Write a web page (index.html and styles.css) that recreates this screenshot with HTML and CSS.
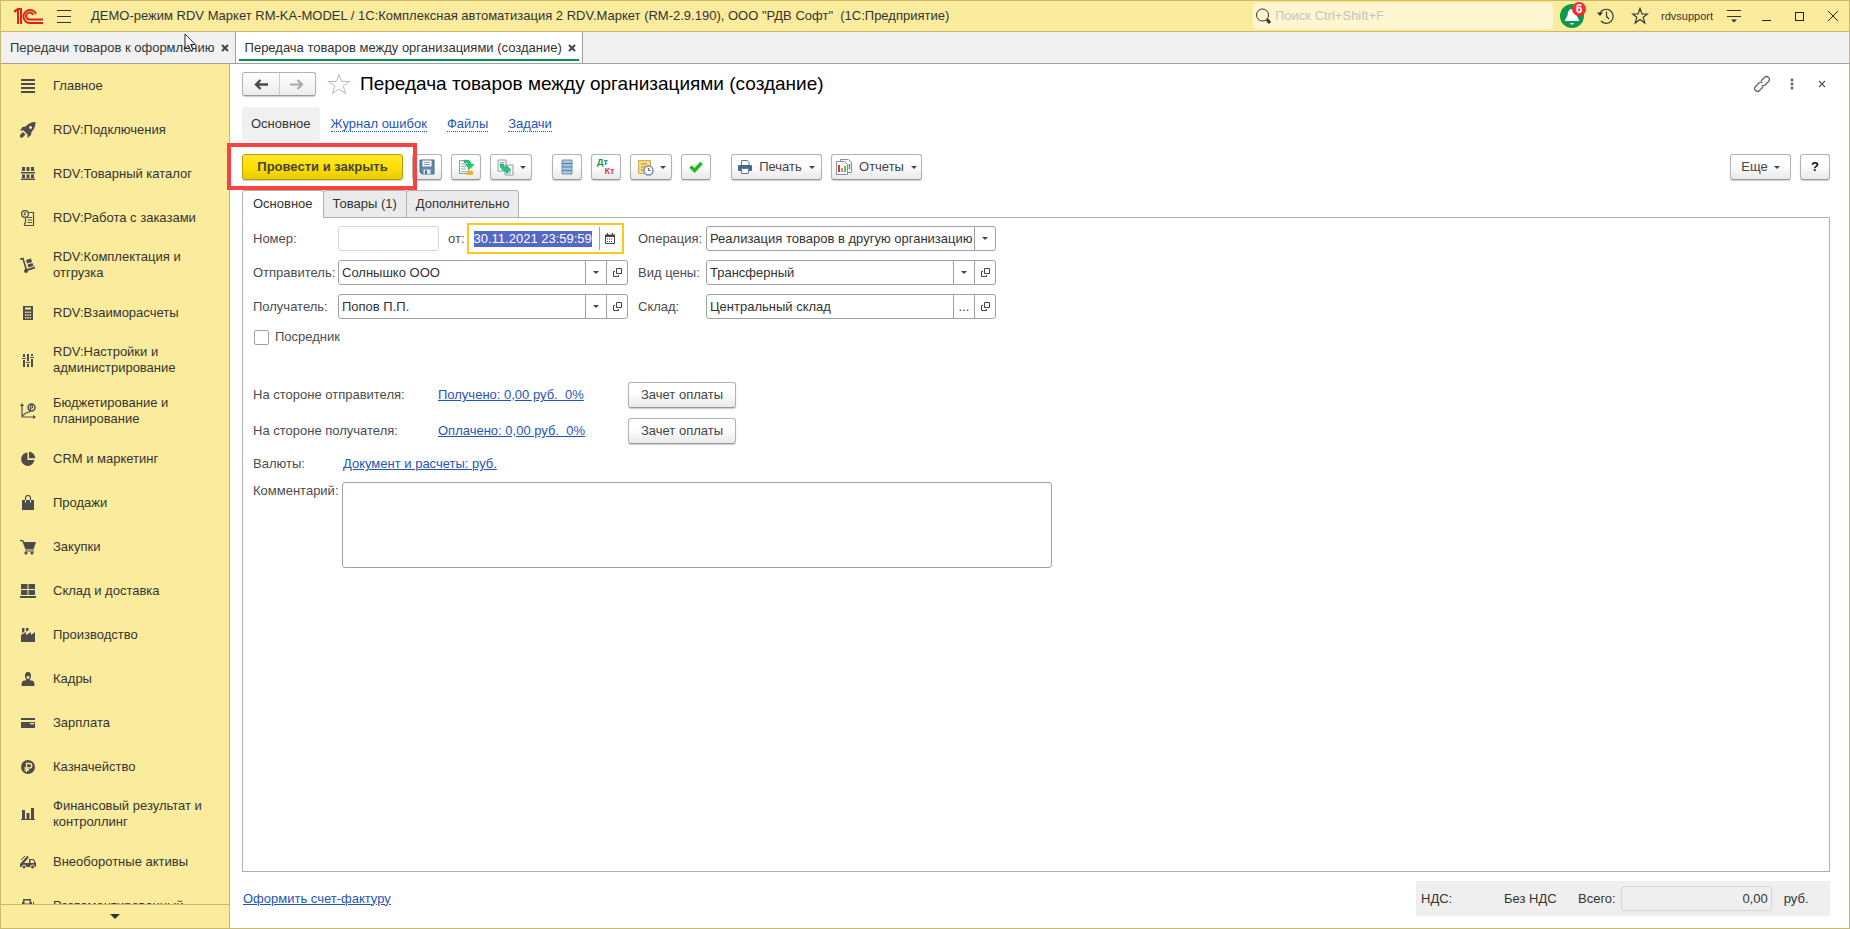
FILE: index.html
```html
<!DOCTYPE html>
<html lang="ru">
<head>
    <meta charset="UTF-8">
    <meta name="viewport" content="width=device-width, initial-scale=1.0">
    <title>Передача товаров между организациями (создание)</title>
    <link rel="stylesheet" href="styles.css">
</head>
<body>
    <header class="titlebar">
        <svg class="logo" width="30" height="16" viewBox="0 0 30 16" fill="none" stroke="#e0211b" stroke-width="2">
            <path d="M0 4 L4 1.500 V16 M7 16 V1 H4 L0 3.500"/>
            <path d="M22 6 A6.500 6.500 0 1 0 16 15 H29"/>
            <path d="M19 7 A3.500 3.500 0 1 0 16 11.500 H29"/>
        </svg>
        <button class="tb-btn menu-btn" aria-label="Меню">
            <svg width="14" height="14" viewBox="0 0 14 14" stroke="#333" stroke-width="1"><path d="M0 1.500H14M0 7.500H14M0 13.500H14"/></svg>
        </button>
        <div class="app-title">ДЕМО-режим RDV Маркет RM-KA-MODEL / 1С:Комплексная автоматизация 2 RDV.Маркет (RM-2.9.190), ООО "РДВ Софт"&nbsp; (1С:Предприятие)</div>
        <div class="search">
            <svg width="17" height="18" viewBox="0 0 17 18" fill="none" stroke="#333"><circle cx="7.500" cy="8" r="6"/><path d="M12 12.500L15 16" stroke-width="3"/></svg>
            <input type="text" placeholder="Поиск Ctrl+Shift+F" aria-label="Поиск">
        </div>
        <button class="tb-btn bell" aria-label="Уведомления">
            <svg width="24" height="26" viewBox="0 0 24 26"><ellipse cx="12" cy="13" rx="12" ry="12" fill="#0b9a4c"/><path d="M12 6c-3.500 0-4 3-4.500 6.500L5 17v1h14v-1l-2.500-4.500C16 9 15.500 6 12 6z" fill="#fff"/><path d="M10 20h4l-1 1.500h-2z" fill="#fff"/></svg>
            <span class="badge">6</span>
        </button>
        <button class="tb-btn" aria-label="История">
            <svg width="18" height="18" viewBox="0 0 18 18" fill="none" stroke="#333" stroke-width="1.200"><path d="M3 6A7 7 0 1 1 4 14M9.500 4.500V9.500L12 12"/><path d="M0 5.500L3 9L6 5.500z" fill="#333" stroke="none"/></svg>
        </button>
        <button class="tb-btn" aria-label="Избранное">
            <svg width="18" height="18" viewBox="0 0 18 18" fill="none" stroke="#333" stroke-width="1.200"><path d="M9 1.500L11 7H16.500L12.200 10.300L13.800 16L9 12.600L4.200 16L5.800 10.300L1.500 7H7z"/></svg>
        </button>
        <span class="user">rdvsupport</span>
        <button class="tb-btn win" aria-label="Настройки">
            <svg width="16" height="14" viewBox="0 0 16 14"><path d="M1 1.500H15M1 7.500H15" stroke="#333"/><path d="M5 10.500h6l-3 3z" fill="#333"/></svg>
        </button>
        <button class="tb-btn win" aria-label="Свернуть">
            <svg width="12" height="12" viewBox="0 0 12 12"><path d="M1 10.500H10" stroke="#222"/></svg>
        </button>
        <button class="tb-btn win" aria-label="Развернуть">
            <svg width="12" height="12" viewBox="0 0 12 12"><rect x="1.500" y="2.500" width="8" height="8" fill="none" stroke="#222"/></svg>
        </button>
        <button class="tb-btn win" aria-label="Закрыть">
            <svg width="12" height="12" viewBox="0 0 12 12"><path d="M1 1L11 11M11 1L1 11" stroke="#222"/></svg>
        </button>
    </header>

    <div class="window-tabs">
        <div class="window-tab">Передачи товаров к оформлению
            <button aria-label="Закрыть вкладку"><svg width="8" height="8" viewBox="0 0 8 8"><path d="M1 1L7 7M7 1L1 7" stroke="#444" stroke-width="2"/></svg></button>
        </div>
        <div class="window-tab current">Передача товаров между организациями (создание)
            <button aria-label="Закрыть вкладку"><svg width="8" height="8" viewBox="0 0 8 8"><path d="M1 1L7 7M7 1L1 7" stroke="#444" stroke-width="2"/></svg></button>
        </div>
        <svg class="cursor" width="13" height="19" viewBox="0 0 13 19"><path d="M1 1V15.500L4.400 12.300L6.800 17.800L9 16.900L6.700 11.500H11.300z" fill="#fff" stroke="#222"/></svg>
    </div>

    <div class="workspace">
        <aside class="sidebar">
            <nav class="sections">
                <a href="#"><svg viewBox="0 0 16 16"><path d="M1 1h14v2H1zM1 5h14v2H1zM1 9h14v2H1zM1 13h14v2H1z"/></svg><span>Главное</span></a>
                <a href="#"><svg viewBox="0 0 16 16"><path fill-rule="evenodd" d="M15.500 0C11 0 8 2 5.500 4.500L2.500 5L0 8.500L3.500 8.500L7.500 12.500L7.500 16L11 13L11.500 10C14 7.500 15.500 5 15.500 0zM10.500 4a1.500 1.500 0 1 0 .1 0z"/><path d="M3 10L0 13V15.500H2.500L5.500 12.500z"/></svg><span>RDV:Подключения</span></a>
                <a href="#"><svg viewBox="0 0 16 16"><path d="M2 1h3v4H2zM6.500 1h3v4h-3zM11 1h3v4h-3zM1 6h14v1.500H1zM2 8.500h3v3.500H2zM6.500 8.500h3v3.500h-3zM11 8.500h3v3.500h-3zM1 12.500h14v1.500H1z"/></svg><span>RDV:Товарный каталог</span></a>
                <a href="#"><svg viewBox="0 0 16 16" fill="none" stroke="#4c4c4c" stroke-width="1.200"><circle cx="5" cy="4" r="3.400"/><path d="M5 2V4.500L3.500 5M8.500 2.500H13.500V15.500H5.500C4 15.500 4 13 5.500 13V8M7.500 7.500H12M7.500 10H12M7.500 12.500H12"/></svg><span>RDV:Работа с заказами</span></a>
                <a href="#"><svg viewBox="0 0 16 16"><path d="M0 1.500L3.500 0.500L7 12L15 9.500V11.500L6 14.500L2.500 2.500L0 3z"/><path d="M6 3l5-1.500 1 3.500-5 1.500zM7.500 7.500l5-1.500 1 3-5 1.500z"/><circle cx="6" cy="14" r="2"/></svg><span>RDV:Комплектация и отгрузка</span></a>
                <a href="#"><svg viewBox="0 0 16 16"><path fill-rule="evenodd" d="M3 1h10v14H3zM5 2.500v2h6v-2zM5 6.500v1.500h1.500V6.500zM7.300 6.500v1.500h1.500V6.500zM9.600 6.500v1.500h1.500V6.500zM5 9.200v1.500h1.500V9.200zM7.300 9.200v1.500h1.500V9.200zM9.600 9.200v1.500h1.500V9.200zM5 12v1.500h1.500V12zM7.300 12v1.500h1.500V12zM9.600 12v1.500h1.500V12z"/></svg><span>RDV:Взаиморасчеты</span></a>
                <a href="#"><svg viewBox="0 0 16 16"><path d="M3 2h2v3H3zM2 6h4v1H2zM3 8h2v7H3zM7 2h2v7H7zM6 10h4v1H6zM7 12h2v3H7zM11 2h2v2h-2zM10 5h4v1h-4zM11 7h2v8h-2z"/></svg><span>RDV:Настройки и администрирование</span></a>
                <a href="#"><svg viewBox="0 0 16 16"><path d="M2 2V14H14M2 13L6 10L9 9L11 7" fill="none" stroke="#4c4c4c" stroke-width="1.200"/><path d="M2 0l2 3H0zM16 14l-3-2v4z"/><circle cx="11.500" cy="4.500" r="3.500" fill="none" stroke="#4c4c4c" stroke-width="1.500"/><path d="M10.500 7V2.500h2v2.500h-3" fill="none" stroke="#4c4c4c"/></svg><span>Бюджетирование и планирование</span></a>
                <a href="#"><svg viewBox="0 0 16 16"><path d="M7.500 1.500A6.700 6.700 0 1 0 14.500 9H7.500z"/><path d="M9 0.800V7.300H15.200A6.500 6.500 0 0 0 9 .8z"/></svg><span>CRM и маркетинг</span></a>
                <a href="#"><svg viewBox="0 0 16 16"><path d="M2 5h12v10H2z"/><path d="M5.500 5V3a2.500 2.500 0 0 1 5 0V5" fill="none" stroke="#4c4c4c" stroke-width="1.200"/><path d="M5.500 5V7.500M10.500 5V7.500" stroke="#fbec9d"/></svg><span>Продажи</span></a>
                <a href="#"><svg viewBox="0 0 16 16"><path d="M0 1h3.200l.8 2H16l-2.500 7.500H5.500L2.200 2.300H0zM5 11.500h9v1H5z"/><circle cx="6" cy="14" r="1.600"/><circle cx="12" cy="14" r="1.600"/></svg><span>Закупки</span></a>
                <a href="#"><svg viewBox="0 0 16 16"><path d="M1 1h6.500v5H1zM8.500 1H15v5H8.500zM1 7h6.500v5H1zM8.500 7H15v5H8.500zM0 13h16v2H0z"/></svg><span>Склад и доставка</span></a>
                <a href="#"><svg viewBox="0 0 16 16"><path d="M1 15V8l5-3v3l5-3v3l4-3v10zM2 1h2.500v3.500L2 6zM6 1h2.500v2.500L6 4.500z"/></svg><span>Производство</span></a>
                <a href="#"><svg viewBox="0 0 16 16"><path fill-rule="evenodd" d="M8 1C5.500 1 5 3 5 5c0 2 1 3.500 1.500 4L3 10c-1 .5-1.500 2-1.500 5h13c0-3-.5-4.500-1.500-5L9.500 9C10 8.500 11 7 11 5c0-2-.5-4-3-4zM6.500 5.500c1 0 2-.5 2.500-1 0 1 .5 1 .5 1 0 1.500-.5 2.500-1.500 2.500S6.500 7 6.500 5.500z"/></svg><span>Кадры</span></a>
                <a href="#"><svg viewBox="0 0 16 16"><path fill-rule="evenodd" d="M1 3h14v2H1zM1 7h14v6H1zM10 8v1.200h4V8z"/></svg><span>Зарплата</span></a>
                <a href="#"><svg viewBox="0 0 16 16"><circle cx="8" cy="8" r="7"/><path d="M6.500 13V4.500h3a2 2 0 0 1 0 4.500H4.500M4.500 11H9" fill="none" stroke="#fbec9d" stroke-width="1.300"/></svg><span>Казначейство</span></a>
                <a href="#"><svg viewBox="0 0 16 16"><path d="M2 4h3v9H2zM6.500 7h3v6h-3zM11 2h3v11h-3zM1 13h14v1H1z"/></svg><span>Финансовый результат и контроллинг</span></a>
                <a href="#"><svg viewBox="0 0 16 16"><path fill-rule="evenodd" d="M0 10L7 2L9 3L4 9H9V5h4.500L16 9v4H0zM10.500 6v3h4L13 6z"/><path d="M1 6L5 2" stroke="#4c4c4c"/><circle cx="4" cy="13" r="2" stroke="#fbec9d"/><circle cx="12.500" cy="13" r="2" stroke="#fbec9d"/></svg><span>Внеоборотные активы</span></a>
                <a href="#"><svg viewBox="0 0 16 16"><path fill-rule="evenodd" d="M3 1h8v3h1v11H2V4h1zM4.500 2.500v3h5v-3zM13 4h1v8h-1z"/></svg><span>Регламентированный</span></a>
            </nav>
            <button class="scroll-down" aria-label="Прокрутить вниз"><svg width="10" height="5" viewBox="0 0 10 5"><path d="M0 0h10L5 5z" fill="#333"/></svg></button>
        </aside>

        <main class="document">
            <div class="doc-head">
                <div class="history">
                    <button aria-label="Назад"><svg width="14" height="11" viewBox="0 0 14 11"><path d="M14 5.500H3M6.500 1L2 5.500L6.500 10" fill="none" stroke="#4a4a4a" stroke-width="2.400"/></svg></button>
                    <button aria-label="Вперед"><svg width="14" height="11" viewBox="0 0 14 11"><path d="M0 5.500H11M7.500 1L12 5.500L7.500 10" fill="none" stroke="#aaa" stroke-width="2.200"/></svg></button>
                </div>
                <svg class="fav" width="24" height="22" viewBox="0 0 24 22" fill="none" stroke="#b4bac2"><path d="M12 1.500L14.700 8.500H22.500L16.200 13L18.600 20.500L12 16L5.400 20.500L7.800 13L1.500 8.500H9.300z"/></svg>
                <h1>Передача товаров между организациями (создание)</h1>
                <div class="doc-tools">
                    <button class="tb-btn" aria-label="Ссылка"><svg width="18" height="18" viewBox="0 0 18 18" fill="none" stroke="#666" stroke-width="1.300"><path d="M8 6L11.500 2.500a2.800 2.800 0 0 1 4 4L12 10a2.800 2.800 0 0 1-3.500 .3M10 12L6.500 15.500a2.800 2.800 0 0 1-4-4L6 8a2.800 2.800 0 0 1 3.500-.3"/></svg></button>
                    <button class="tb-btn" aria-label="Еще"><svg width="4" height="12" viewBox="0 0 4 12" fill="#666"><circle cx="2" cy="2" r="1.500"/><circle cx="2" cy="6" r="1.500"/><circle cx="2" cy="10" r="1.500"/></svg></button>
                    <button class="tb-btn" aria-label="Закрыть"><svg width="8" height="8" viewBox="0 0 8 8"><path d="M1 1L7 7M7 1L1 7" stroke="#555" stroke-width="1.200"/></svg></button>
                </div>
            </div>

            <nav class="links">
                <span class="active">Основное</span>
                <a href="#">Журнал ошибок</a>
                <a href="#">Файлы</a>
                <a href="#">Задачи</a>
            </nav>

            <div class="toolbar">
                <div class="highlight"></div>
                <button class="btn primary">Провести и закрыть</button>
                <button class="btn icon" aria-label="Записать"><svg width="16" height="16" viewBox="0 0 16 16"><path d="M1 1h14v14H3l-2-2z" fill="#5b87b5" stroke="#44698f"/><path d="M3.500 1.500h9v6h-9z" fill="#fff"/><path d="M5 3.500h6M5 5.500h6" stroke="#8aa"/><path d="M4.500 10.500h7V15h-7z" fill="#dde6ee"/><path d="M6 11.500h2V15H6z" fill="#44698f"/></svg></button>
                <button class="btn icon" aria-label="Провести"><svg width="17" height="17" viewBox="0 0 17 17"><path d="M1.500 1.500h9v13h-9z" fill="#fff" stroke="#8a9aaa"/><path d="M3 5h5M3 7.500h5M3 10h5M3 12.500h5" stroke="#9ab"/><path d="M6 1.500c4-1 7 0 7 4h3l-4.500 4.500L7.500 5.500h3c0-1.500-2-2-4.500-2z" fill="#1ed27b" stroke="#159a55" stroke-width=".7"/><path d="M8.500 11.500h6.500v4.500H8.500z" fill="#f3cb4c"/><path d="M8.500 13h6.500M8.500 15h6.500" stroke="#c79a22" stroke-width=".8"/></svg></button>
                <button class="btn drop" aria-label="Создать на основании"><svg width="17" height="17" viewBox="0 0 17 17"><path d="M1 1h8v11H1zM8 6h8v10H8z" fill="#fff" stroke="#8a9aaa"/><path d="M2.500 3.500h5M10 12h4M10 14h4" stroke="#9ab"/><path d="M3 5h3.500c0 3 1 4 3 4V6.500L13.500 10.500L9.500 14.500V12C5 12 3 9 3 5z" fill="#1ed27b" stroke="#159a55" stroke-width=".7"/></svg><i class="caret"></i></button>
                <button class="btn icon group" aria-label="Реестр"><svg width="12" height="16" viewBox="0 0 12 16"><path d="M1 1h10v14H1z" fill="#a5c6df" stroke="#6f93b0"/><path d="M1 4.500h10M1 8h10M1 11.500h10" stroke="#567e9e"/></svg></button>
                <button class="btn icon dtkt" aria-label="Дебет и кредит"><b>Дт</b><b>Кт</b></button>
                <button class="btn drop" aria-label="Задача"><svg width="17" height="17" viewBox="0 0 17 17"><path d="M1.500 1.500h12v13h-12z" fill="#f6da85" stroke="#cfae55"/><path d="M4 5h6M4 8h4M4 11h3" stroke="#b5923c"/><circle cx="11.500" cy="11.500" r="4.500" fill="#fff" stroke="#6c94c4" stroke-width="1.500"/><path d="M11.500 9v2.500h2" stroke="#c33" fill="none"/></svg><i class="caret"></i></button>
                <button class="btn icon" aria-label="Готово"><svg width="14" height="12" viewBox="0 0 14 12"><path d="M1.500 5.500L5.500 9.500L12.500 2" fill="none" stroke="#1dbb1d" stroke-width="3.500"/></svg></button>
                <button class="btn text group"><svg width="14" height="14" viewBox="0 0 14 14"><path d="M3.500 .5h6l1.500 2v3h-7.500z" fill="#fff" stroke="#5c7d9c"/><rect x="0" y="5" width="14" height="6" rx="1" fill="#44698f"/><path d="M3.500 8.500h7v5h-7z" fill="#fff" stroke="#5c7d9c"/></svg>Печать<i class="caret"></i></button>
                <button class="btn text"><svg width="16" height="16" viewBox="0 0 16 16"><path d="M4.500 .5h8l3 3v10h-11z" fill="#fff" stroke="#7d93a6"/><path d="M.5 2.500h8l3 3v10H.5z" fill="#fff" stroke="#7d93a6"/><path d="M3 6v7" stroke="#d33" stroke-width="2"/><path d="M6 9v4" stroke="#e84" stroke-width="2"/><path d="M9 7v6M13.500 5v5" stroke="#3a4" stroke-width="1.500"/></svg>Отчеты<i class="caret"></i></button>
                <button class="btn more">Еще<i class="caret"></i></button>
                <button class="btn icon help">?</button>
            </div>

            <div class="page-tabs">
                <button class="active">Основное</button>
                <button>Товары (1)</button>
                <button>Дополнительно</button>
            </div>

            <form class="panel">
                <div class="fields">
                    <label for="number">Номер:</label>
                    <div class="number-row">
                        <input class="number" type="text" id="number">
                        <label for="date">от:</label>
                        <div class="date-box">
                            <input type="text" id="date" value="30.11.2021 23:59:59">
                            <button type="button" aria-label="Календарь"><svg width="10" height="11" viewBox="0 0 10 11"><path d="M.5 2.500h9v8h-9z" fill="none" stroke="#444"/><path d="M0 1.500h10v2.500H0zM2 0h1v2H2zM7 0h1v2H7z" fill="#444"/><path d="M2 6h6M2 8.500h6" stroke="#444" stroke-dasharray="1 1"/></svg></button>
                        </div>
                    </div>
                    <label for="operation">Операция:</label>
                    <div class="field">
                        <select id="operation"><option>Реализация товаров в другую организацию</option></select>
                        <span class="cell"><i class="caret"></i></span>
                    </div>

                    <label for="sender">Отправитель:</label>
                    <div class="field">
                        <input type="text" id="sender" value="Солнышко ООО">
                        <button type="button" class="cell" aria-label="Выбрать"><i class="caret"></i></button>
                        <button type="button" class="cell" aria-label="Открыть"><svg width="9" height="9" viewBox="0 0 9 9" fill="none" stroke="#444"><path d="M3.500 .5h5v5h-5zM2 3.500H.5v5h5V7"/></svg></button>
                    </div>
                    <label for="price">Вид цены:</label>
                    <div class="field">
                        <input type="text" id="price" value="Трансферный">
                        <button type="button" class="cell" aria-label="Выбрать"><i class="caret"></i></button>
                        <button type="button" class="cell" aria-label="Открыть"><svg width="9" height="9" viewBox="0 0 9 9" fill="none" stroke="#444"><path d="M3.500 .5h5v5h-5zM2 3.500H.5v5h5V7"/></svg></button>
                    </div>

                    <label for="receiver">Получатель:</label>
                    <div class="field">
                        <input type="text" id="receiver" value="Попов П.П.">
                        <button type="button" class="cell" aria-label="Выбрать"><i class="caret"></i></button>
                        <button type="button" class="cell" aria-label="Открыть"><svg width="9" height="9" viewBox="0 0 9 9" fill="none" stroke="#444"><path d="M3.500 .5h5v5h-5zM2 3.500H.5v5h5V7"/></svg></button>
                    </div>
                    <label for="store">Склад:</label>
                    <div class="field">
                        <input type="text" id="store" value="Центральный склад">
                        <button type="button" class="cell">...</button>
                        <button type="button" class="cell" aria-label="Открыть"><svg width="9" height="9" viewBox="0 0 9 9" fill="none" stroke="#444"><path d="M3.500 .5h5v5h-5zM2 3.500H.5v5h5V7"/></svg></button>
                    </div>
                </div>

                <label class="check"><input type="checkbox">Посредник</label>

                <div class="payments">
                    <span>На стороне отправителя:</span>
                    <a href="#">Получено: 0,00 руб.&nbsp; 0%</a>
                    <button type="button" class="btn">Зачет оплаты</button>
                    <span>На стороне получателя:</span>
                    <a href="#">Оплачено: 0,00 руб.&nbsp; 0%</a>
                    <button type="button" class="btn">Зачет оплаты</button>
                </div>

                <div class="currency">
                    <span>Валюты:</span>
                    <a href="#">Документ и расчеты: руб.</a>
                </div>

                <div class="comment">
                    <label for="comment">Комментарий:</label>
                    <textarea id="comment"></textarea>
                </div>
            </form>

            <footer class="doc-foot">
                <a href="#">Оформить счет-фактуру</a>
                <div class="totals">
                    <span class="vat">НДС:</span>
                    <span class="vat-value">Без НДС</span>
                    <label for="total">Всего:</label>
                    <input type="text" id="total" value="0,00" readonly>
                    <span>руб.</span>
                </div>
            </footer>
        </main>
    </div>

    <script>
        const dateInput = document.getElementById('date');
        dateInput.focus();
        dateInput.select();
    </script>
</body>
</html>
```
FILE: styles.css
```css
* {
    box-sizing: border-box;
}

body {
    margin: 0;
    height: 100vh;
    display: flex;
    flex-direction: column;
    border: 1px solid #c9b96a;
    background-color: #fff;
    color: #333;
    font-family: "Liberation Sans", Arial, sans-serif;
    font-size: 13px;
    line-height: 16px;
    overflow: hidden;
}

button, input, select, textarea {
    font: inherit;
    color: inherit;
    margin: 0;
}

a {
    color: #1f55b5;
}

svg {
    display: block;
    flex: none;
}

/* Title bar */
.titlebar {
    height: 31px;
    flex: none;
    display: flex;
    align-items: center;
    padding-left: 13px;
    background-color: #fbec9d;
    border-bottom: 1px solid #c9b96a;
}

.tb-btn {
    width: 34px;
    height: 28px;
    padding: 0;
    border: none;
    background: none;
    display: flex;
    align-items: center;
    justify-content: center;
    position: relative;
}

.tb-btn.win {
    width: 33px;
}

.menu-btn {
    margin-left: 3px;
}

.app-title {
    flex: 1;
    margin-left: 10px;
    white-space: nowrap;
}

.search {
    width: 300px;
    height: 26px;
    display: flex;
    align-items: center;
    padding-left: 2px;
    background-color: #fdf6d0;
    border-radius: 3px;
}

.search input {
    flex: 1;
    border: none;
    background: none;
    outline: none;
    padding: 0 3px;
}

.search input::placeholder {
    color: #c3c3c3;
}

.bell {
    margin-left: 2px;
}

.badge {
    position: absolute;
    top: 0;
    right: 3px;
    width: 14px;
    height: 14px;
    border-radius: 7px;
    background-color: #fb2b2b;
    color: #fff;
    font-size: 12px;
    font-weight: bold;
    line-height: 14px;
}

.user {
    margin: 0 4px;
    font-size: 11px;
}

/* Open windows */
.window-tabs {
    height: 32px;
    flex: none;
    display: flex;
    position: relative;
    background-color: #f1f1f1;
    border-bottom: 1px solid #a0a0a0;
}

.window-tab {
    display: flex;
    align-items: center;
    gap: 6px;
    padding: 0 6px 0 9px;
    border-right: 1px solid #a0a0a0;
    white-space: nowrap;
}

.window-tab.current {
    background: linear-gradient(#0b9150, #0b9150) no-repeat 3px 27px / calc(100% - 6px) 2px #fff;
}

.window-tab button {
    padding: 0;
    border: none;
    background: none;
}

.cursor {
    position: absolute;
    left: 183px;
    top: 1px;
}

/* Sections panel */
.workspace {
    flex: 1;
    min-height: 0;
    display: flex;
}

.sidebar {
    width: 229px;
    flex: none;
    display: flex;
    flex-direction: column;
    background-color: #fbec9d;
    border-right: 1px solid #c9b96a;
}

.sections {
    flex: 1;
    min-height: 0;
    overflow: hidden;
}

.sections a {
    display: flex;
    align-items: center;
    gap: 17px;
    min-height: 44px;
    padding: 9px 20px 10px 19px;
    color: #333;
    text-decoration: none;
}

.sections svg {
    width: 16px;
    height: 16px;
    fill: #4c4c4c;
}

.sections svg[fill="none"] {
    fill: none;
}

.scroll-down {
    height: 24px;
    flex: none;
    display: flex;
    align-items: center;
    justify-content: center;
    border: none;
    border-top: 1px solid #c9b96a;
    background: none;
}

/* Document */
.document {
    flex: 1;
    min-width: 0;
    display: flex;
    flex-direction: column;
    padding: 8px 19px 12px 12px;
}

.doc-head {
    display: flex;
    align-items: center;
    height: 24px;
}

.history {
    display: flex;
    width: 74px;
    height: 24px;
    border: 1px solid #b3b3b3;
    border-bottom-color: #999;
    border-radius: 3px;
    background: linear-gradient(#fff, #ececec);
    box-shadow: 0 1px 1px #ccc;
}

.history button {
    flex: 1;
    display: flex;
    align-items: center;
    justify-content: center;
    padding: 0;
    border: none;
    background: none;
}

.history button + button {
    border-left: 1px solid #ccc;
}

.fav {
    margin-left: 11px;
}

h1 {
    flex: 1;
    margin: 0 0 0 9px;
    color: #000;
    font-size: 19px;
    font-weight: normal;
    line-height: 24px;
}

.doc-tools {
    display: flex;
    margin-right: -7px;
}

.doc-tools .tb-btn {
    width: 30px;
}

.links {
    display: flex;
    align-items: center;
    gap: 20px;
    height: 34px;
    margin-top: 11px;
}

.links .active {
    margin-right: -9px;
    padding: 9px;
    border-radius: 3px;
    background-color: #f0f0f0;
}

.links a {
    text-decoration: none;
    line-height: 14px;
    border-bottom: 1px dotted #1f55b5;
}

.toolbar {
    position: relative;
    display: flex;
    gap: 9px;
    margin-top: 13px;
}

.btn {
    height: 26px;
    padding: 0;
    display: flex;
    align-items: center;
    justify-content: center;
    border: 1px solid #b3b3b3;
    border-bottom-color: #999;
    border-radius: 3px;
    background: linear-gradient(#fff 40%, #e9e9e9);
    box-shadow: 0 1px 1px #ccc;
    color: #444;
}

.primary {
    width: 161px;
    border-color: #b39b00;
    background: linear-gradient(#ffe72e, #ffdf00 50%, #e8ca00);
    font-weight: bold;
}

.icon {
    width: 30px;
}

.drop {
    width: 42px;
    gap: 6px;
}

.text {
    width: 91px;
    gap: 7px;
}

.group {
    margin-left: 11px;
}

.caret {
    border: 3px solid transparent;
    border-top-color: #444;
    border-bottom: none;
}

.dtkt {
    flex-direction: column;
    font-size: 9px;
    line-height: 9px;
}

.dtkt b {
    margin-right: 7px;
    color: #16894b;
}

.dtkt b + b {
    margin: 0 0 0 7px;
    color: #d94141;
}

.more {
    width: 61px;
    margin-left: auto;
    gap: 6px;
}

.help {
    color: #111;
    font-weight: bold;
}

/* Red frame round the main button */
.highlight {
    position: absolute;
    z-index: 1;
    left: -15px;
    top: -11px;
    width: 190px;
    height: 47px;
    border: 4px solid #fb4141;
    pointer-events: none;
}

.page-tabs {
    display: flex;
    margin-top: 10px;
    margin-bottom: -1px;
    position: relative;
}

.page-tabs button {
    height: 28px;
    padding: 0 9px;
    border: 1px solid #b0b0b0;
    border-radius: 3px 3px 0 0;
    background-color: #ebebeb;
}

.page-tabs button + button {
    margin-left: -1px;
}

.page-tabs .active {
    padding: 0 10px;
    background-color: #fff;
    border-bottom-color: #fff;
}

.panel {
    flex: 1;
    padding: 8px 10px;
    border: 1px solid #b0b0b0;
    color: #4c4c4c;
}

.fields {
    display: grid;
    grid-template-columns: 85px 290px 78px 290px;
    grid-auto-rows: 25px;
    row-gap: 9px;
    align-items: center;
}

.fields > label:nth-child(4n + 3) {
    padding-left: 10px;
}

.field, .number {
    height: 25px;
    border: 1px solid #a0a0a0;
    border-radius: 3px;
    color: #333;
    background-color: #fff;
}

.field {
    display: flex;
}

.field input, .field select {
    flex: 1;
    min-width: 0;
    padding: 0 0 0 3px;
    border: none;
    outline: none;
    background: none;
    appearance: none;
}

.cell {
    width: 21px;
    flex: none;
    padding: 0;
    display: flex;
    align-items: center;
    justify-content: center;
    border: none;
    border-left: 1px solid #a0a0a0;
    background: none;
}

.number-row {
    display: flex;
    align-items: center;
}

.number {
    width: 101px;
    margin-right: 9px;
    border-color: #d6d6d6;
}

.date-box {
    display: flex;
    align-items: center;
    width: 157px;
    height: 31px;
    margin: -3px 0 -3px 2px;
    border: 2px solid #f9c920;
}

.date-box input {
    width: 130px;
    padding: 0 0 0 5px;
    border: none;
    outline: none;
}

.date-box input::selection {
    background-color: #5468c4;
    color: #fff;
}

.date-box button {
    height: 23px;
    padding: 0 0 0 5px;
    border: none;
    border-left: 1px solid #a0a0a0;
    background: none;
}

.check {
    display: flex;
    align-items: center;
    gap: 6px;
    margin-top: 10px;
}

.check input {
    width: 15px;
    height: 15px;
    margin-left: 1px;
    border: 1px solid #a0a0a0;
    border-radius: 2px;
    appearance: none;
}

.payments {
    display: grid;
    grid-template-columns: 185px 190px 108px;
    row-gap: 10px;
    align-items: center;
    margin-top: 37px;
}

.payments a {
    justify-self: start;
}

.currency {
    display: grid;
    grid-template-columns: 90px auto;
    justify-content: start;
    margin-top: 12px;
}

.comment {
    display: flex;
    margin-top: 10px;
}

.comment label {
    width: 89px;
    padding-top: 1px;
}

.comment textarea {
    width: 710px;
    height: 86px;
    border: 1px solid #a0a0a0;
    border-radius: 3px;
    resize: none;
}

.doc-foot {
    display: flex;
    align-items: center;
    justify-content: space-between;
    margin-top: 9px;
    padding-left: 1px;
}

.totals {
    display: flex;
    align-items: center;
    width: 414px;
    height: 35px;
    padding: 0 5px;
    background-color: #efefef;
}

.vat {
    width: 83px;
}

.vat-value {
    width: 74px;
}

.totals input {
    width: 151px;
    height: 25px;
    margin: 0 12px 0 5px;
    padding: 0 3px;
    border: 1px solid #d6d6d6;
    border-radius: 3px;
    background: none;
    text-align: right;
}
```
